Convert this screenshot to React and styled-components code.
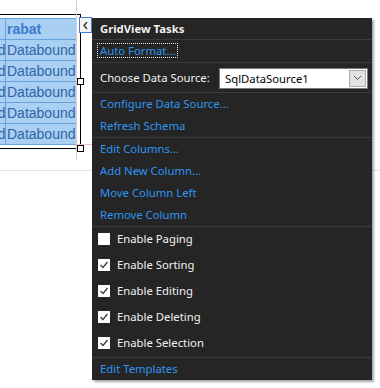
import React from "react";
import styled, { createGlobalStyle } from "styled-components";

const GlobalStyle = createGlobalStyle`
  html, body {
    margin: 0;
    padding: 0;
    background: #ffffff;
  }
  body {
    width: 380px;
    height: 388px;
    overflow: hidden;
    font-family: "Noto Sans", "Open Sans", sans-serif;
  }
`;

const Canvas = styled.div`
  position: relative;
  width: 380px;
  height: 388px;
  overflow: hidden;
`;

const GridFrame = styled.div`
  display: inline-block;
  margin-top: 14px;
  margin-left: -70px;
  padding: 3px 3px 3px 4px;
  border: 1px solid #000;
  line-height: 0;
`;

const Grid = styled.table`
  border-collapse: collapse;
  table-layout: fixed;
  width: 141px;
  font-family: "Liberation Sans", Arial, sans-serif;
  font-size: 14px;
  background: #a9cff2;
  color: #3064a6;
`;

const Cell = styled.td`
  height: 20px;
  padding: 0 0 0 1px;
  border: 1px solid #68a2da;
  white-space: nowrap;
  overflow: hidden;
  text-align: ${(p) => (p.$right ? "right" : "left")};
  font-weight: ${(p) => (p.$head ? 700 : 400)};
  color: ${(p) => (p.$head ? "#3a7ccc" : "#3064a6")};
  line-height: 20px;
`;

const GuideV = styled.div`
  position: absolute;
  left: 76px;
  top: 0;
  width: 1px;
  height: 160px;
  background: #e9c9c9;
`;

const GuideH = styled.div`
  position: absolute;
  left: 76px;
  top: 144px;
  width: 16px;
  height: 1px;
  background: #e9c9c9;
`;

const Handle = styled.div`
  position: absolute;
  left: 77px;
  top: ${(p) => p.$top}px;
  width: 5px;
  height: 5px;
  background: #fff;
  border: 1px solid #000;
`;

const Rule = styled.div`
  margin-top: 16px;
  height: 1px;
  background: #e2e2e2;
`;

const TagButton = styled.div`
  position: absolute;
  left: 79px;
  top: 17px;
  width: 11px;
  height: 14px;
  border: 1px solid #3d7fd4;
  background: #f4f4f4;
  display: flex;
  align-items: center;
  justify-content: center;
`;

const Panel = styled.div`
  position: absolute;
  left: 92px;
  top: 18px;
  width: 280px;
  background: #252526;
  color: #f1f1f1;
  font-size: 11.3px;
  box-shadow: 2px 2px 2px rgba(0, 0, 0, 0.35);
  display: flex;
  flex-direction: column;
`;

const Title = styled.div`
  height: 21px;
  padding-left: 8px;
  padding-bottom: 1px;
  box-sizing: border-box;
  display: flex;
  align-items: center;
  font-weight: 700;
`;

const Sep = styled.div`
  height: 1px;
  background: #3a3a3c;
`;

const Group = styled.div`
  display: flex;
  flex-direction: column;
`;

const LinkRow = styled.div`
  height: 22px;
  padding-left: 8px;
  padding-bottom: 1px;
  box-sizing: border-box;
  display: flex;
  align-items: center;
  color: #2f95f0;
  white-space: nowrap;
`;

const Focus = styled.span`
  margin-left: -3px;
  padding: 0 2px;
  height: 13px;
  display: flex;
  align-items: center;
  border: 1px dotted #e8e8e8;
`;

const SourceRow = styled.div`
  height: 29px;
  padding-left: 8px;
  padding-right: 4px;
  display: flex;
  align-items: center;
  justify-content: space-between;
  white-space: nowrap;
`;

const Select = styled.div`
  flex-shrink: 0;
  width: 142px;
  height: 19px;
  border: 1px solid #7a7a7a;
  background: #fff;
  color: #000;
  display: flex;
  align-items: center;
  justify-content: space-between;
  padding-left: 5px;
  margin-top: 1px;
`;

const SelectButton = styled.div`
  width: 17px;
  height: 17px;
  margin-right: 1px;
  background: #e3e3e3;
  border: 1px solid #acacac;
  box-sizing: border-box;
  display: flex;
  align-items: center;
  justify-content: center;
`;

const CheckRow = styled.div`
  height: 26px;
  padding-left: 6px;
  padding-bottom: 3px;
  box-sizing: border-box;
  display: flex;
  align-items: center;
  gap: 7px;
`;

const Box = styled.span`
  width: 12px;
  height: 12px;
  background: #fff;
  display: flex;
  align-items: center;
  justify-content: center;
`;

const columns = ["pris", "rabat"];
const rows = 5;

const options = [
  { label: "Enable Paging", checked: false },
  { label: "Enable Sorting", checked: true },
  { label: "Enable Editing", checked: true },
  { label: "Enable Deleting", checked: true },
  { label: "Enable Selection", checked: true },
];

export default function App() {
  return (
    <Canvas>
      <GlobalStyle />
      <GridFrame>
        <Grid>
          <colgroup>
            <col style={{ width: 70 }} />
            <col style={{ width: 71 }} />
          </colgroup>
          <thead>
            <tr>
              <Cell $head>{columns[0]}</Cell>
              <Cell $head>{columns[1]}</Cell>
            </tr>
          </thead>
          <tbody>
            {Array.from({ length: rows }).map((_, i) => (
              <tr key={i}>
                <Cell $right>Databound</Cell>
                <Cell>Databound</Cell>
              </tr>
            ))}
          </tbody>
        </Grid>
      </GridFrame>
      <Rule />
      <GuideV />
      <GuideH />
      <Handle $top={78} />
      <Handle $top={145} />
      <TagButton>
        <svg width="7" height="9" viewBox="0 0 7 9">
          <path d="M5 1 L2 4.5 L5 8" fill="none" stroke="#333" strokeWidth="1.3" />
        </svg>
      </TagButton>
      <Panel>
        <Title>GridView Tasks</Title>
        <Sep />
        <LinkRow>
          <Focus>Auto Format...</Focus>
        </LinkRow>
        <Sep />
        <SourceRow>
          <span>Choose Data Source:</span>
          <Select>
            <span>SqlDataSource1</span>
            <SelectButton>
              <svg width="9" height="6" viewBox="0 0 9 6">
                <path d="M1 1 L4.5 4.5 L8 1" fill="none" stroke="#555" strokeWidth="1" />
              </svg>
            </SelectButton>
          </Select>
        </SourceRow>
        <Sep />
        <Group>
          <LinkRow>Configure Data Source...</LinkRow>
          <LinkRow>Refresh Schema</LinkRow>
        </Group>
        <Sep />
        <Group>
          <LinkRow>Edit Columns...</LinkRow>
          <LinkRow>Add New Column...</LinkRow>
          <LinkRow>Move Column Left</LinkRow>
          <LinkRow>Remove Column</LinkRow>
        </Group>
        <Sep />
        <Group>
          {options.map((o) => (
            <CheckRow key={o.label}>
              <Box>
                {o.checked && (
                  <svg width="10" height="10" viewBox="0 0 10 10">
                    <path d="M1.5 5 L4 7.5 L8.5 2" fill="none" stroke="#3c3c3c" strokeWidth="1.3" />
                  </svg>
                )}
              </Box>
              <span>{o.label}</span>
            </CheckRow>
          ))}
        </Group>
        <Sep />
        <LinkRow>Edit Templates</LinkRow>
      </Panel>
    </Canvas>
  );
}
